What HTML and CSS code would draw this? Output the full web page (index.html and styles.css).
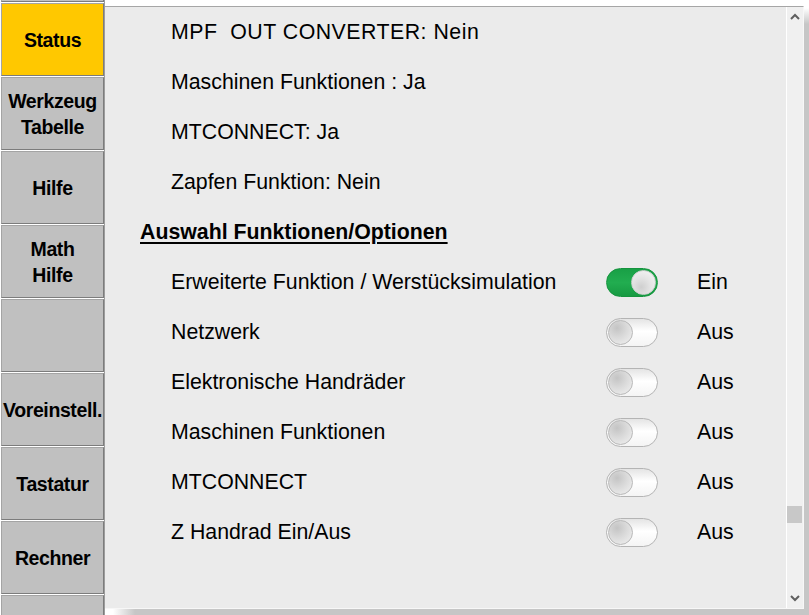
FILE: index.html
```html
<!DOCTYPE html>
<html lang="de">
<head>
<meta charset="utf-8">
<title>Status</title>
<link rel="stylesheet" href="styles.css">
</head>
<body>
<div class="app">
  <nav class="sidebar">
    <div class="btn stub"></div>
    <div class="btn active">Status</div>
    <div class="btn">Werkzeug<br>Tabelle</div>
    <div class="btn">Hilfe</div>
    <div class="btn">Math<br>Hilfe</div>
    <div class="btn"></div>
    <div class="btn">Voreinstell.</div>
    <div class="btn">Tastatur</div>
    <div class="btn">Rechner</div>
    <div class="btn"></div>
  </nav>
  <main class="panel">
    <div class="topstrip"></div>
    <div class="frame">
      <div class="content">
        <div class="row"><span class="label wide">MPF&nbsp; OUT CONVERTER: Nein</span></div>
        <div class="row"><span class="label">Maschinen Funktionen : Ja</span></div>
        <div class="row"><span class="label">MTCONNECT: Ja</span></div>
        <div class="row"><span class="label">Zapfen Funktion: Nein</span></div>
        <div class="row heading"><span>Auswahl Funktionen/Optionen</span></div>
        <div class="row option"><span class="label">Erweiterte Funktion / Werstücksimulation</span><span class="toggle on"><span class="knob"></span></span><span class="state">Ein</span></div>
        <div class="row option"><span class="label">Netzwerk</span><span class="toggle"><span class="knob"></span></span><span class="state">Aus</span></div>
        <div class="row option"><span class="label">Elektronische Handräder</span><span class="toggle"><span class="knob"></span></span><span class="state">Aus</span></div>
        <div class="row option"><span class="label">Maschinen Funktionen</span><span class="toggle"><span class="knob"></span></span><span class="state">Aus</span></div>
        <div class="row option"><span class="label">MTCONNECT</span><span class="toggle"><span class="knob"></span></span><span class="state">Aus</span></div>
        <div class="row option"><span class="label">Z Handrad Ein/Aus</span><span class="toggle"><span class="knob"></span></span><span class="state">Aus</span></div>
      </div>
      <div class="scrollbar">
        <svg class="arrow" width="10" height="7" viewBox="0 0 10 7"><path d="M1 6 L5 2 L9 6" fill="none" stroke="#5f5f5f" stroke-width="2"/></svg>
        <div class="track"><div class="thumb"></div></div>
        <svg class="arrow" width="10" height="7" viewBox="0 0 10 7"><path d="M1 1 L5 5 L9 1" fill="none" stroke="#5f5f5f" stroke-width="2"/></svg>
      </div>
    </div>
    <div class="bottomstrip"></div>
  </main>
  <div class="rightstrip"></div>
</div>
</body>
</html>
```

FILE: styles.css
```css
html, body {
  margin: 0;
  padding: 0;
}
body {
  width: 809px;
  height: 615px;
  overflow: hidden;
  background: #c6c6c6;
  font-family: "Liberation Sans", Arial, sans-serif;
  color: #000;
}
.app {
  display: flex;
  width: 809px;
  height: 615px;
}
.sidebar {
  width: 104px;
  flex: none;
  background: #ffffff;
  padding-left: 1px;
  box-sizing: border-box;
  display: flex;
  flex-direction: column;
  gap: 1px;
  overflow: hidden;
}
.btn {
  flex: none;
  width: 103px;
  height: 73px;
  box-sizing: border-box;
  background: #c0c0c0;
  border: 1px solid #a4a4a4;
  border-right-color: #7c7c7c;
  border-bottom-color: #7c7c7c;
  display: flex;
  align-items: center;
  justify-content: center;
  text-align: center;
  font-weight: bold;
  font-size: 19.5px;
  line-height: 26px;
  letter-spacing: -0.4px;
}
.btn.stub {
  height: 2px;
  border-top: none;
}
.btn.active {
  background: #ffc800;
}
.panel {
  width: 700px;
  flex: none;
  display: flex;
  flex-direction: column;
  border-left: 1px solid #9c9c9c;
  box-sizing: border-box;
}
.topstrip {
  height: 6px;
  background: #ffffff;
  flex: none;
}
.frame {
  flex: 1;
  display: flex;
  border-top: 1px solid #a6a6a6;
  border-bottom: 1px solid #f7f7f7;
  border-right: 1px solid #f7f7f7;
  min-height: 0;
}
.content {
  flex: 1;
  background: #ebebeb;
  overflow: hidden;
}
.row {
  height: 50px;
  display: flex;
  align-items: center;
  padding-left: 66px;
  font-size: 21.3px;
  white-space: nowrap;
}
.label.wide {
  letter-spacing: 0.5px;
}
.row.heading {
  padding-left: 35px;
  font-weight: bold;
  text-decoration: underline;
  text-decoration-thickness: 2px;
  text-underline-offset: 3px;
}
.option .label {
  width: 435px;
  flex: none;
}
.toggle {
  position: relative;
  width: 52px;
  height: 29px;
  box-sizing: border-box;
  border-radius: 15px;
  border: 1px solid #b4b4b4;
  background: linear-gradient(to bottom, #e4e4e4 0%, #ffffff 45%, #f4f4f4 100%);
  flex: none;
}
.toggle .knob {
  position: absolute;
  top: 1px;
  left: 1px;
  width: 25px;
  height: 25px;
  box-sizing: border-box;
  border-radius: 50%;
  border: 1px solid #b8b8b8;
  background: radial-gradient(circle at 35% 30%, #c4c4c4 0%, #dadada 45%, #f2f2f2 100%);
}
.toggle.on {
  border-color: #16943e;
  background: linear-gradient(to bottom, #19a046 0%, #22ad50 50%, #179a42 100%);
}
.toggle.on .knob {
  left: auto;
  right: 1px;
  border-color: #d0d0d0;
  background: radial-gradient(circle at 40% 70%, #cfcfcf 0%, #e4e4e4 45%, #f8f8f8 100%);
}
.state {
  margin-left: 39px;
}
.scrollbar {
  width: 17px;
  flex: none;
  box-sizing: border-box;
  border-left: 1px solid #ffffff;
  background: #f0f0f0;
  display: flex;
  flex-direction: column;
  align-items: center;
}
.arrow {
  flex: none;
  margin: 6px 0;
}
.track {
  flex: 1;
  width: 100%;
  position: relative;
}
.thumb {
  position: absolute;
  left: 0;
  right: 1px;
  top: 480px;
  height: 17px;
  background: #c8c8c8;
}
.bottomstrip {
  height: 6px;
  flex: none;
  background: linear-gradient(to right, #ffffff 0px, #ffffff 8px, #c6c6c6 30px);
}
.rightstrip {
  flex: 1;
  background: linear-gradient(to bottom, #ffffff 0px, #ffffff 8px, #c6c6c6 24px);
}
```
